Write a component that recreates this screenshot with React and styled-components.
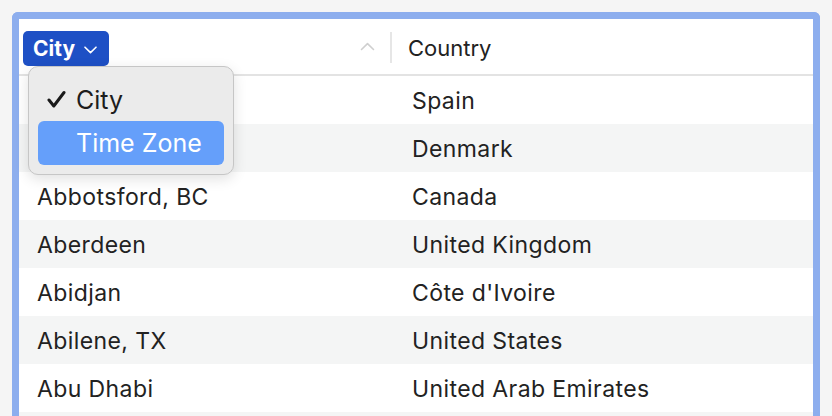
import styled, { createGlobalStyle } from "styled-components";

const GlobalStyle = createGlobalStyle`
  html, body {
    margin: 0;
    padding: 0;
    background: #f5f5f5;
    height: 416px;
    overflow: hidden;
  }
  body {
    font-family: Inter, "Noto Sans", "Liberation Sans", sans-serif;
    color: #222;
  }
`;

// first two city names sit under the open menu
const rows = [
  ["", "Spain"],
  ["", "Denmark"],
  ["Abbotsford, BC", "Canada"],
  ["Aberdeen", "United Kingdom"],
  ["Abidjan", "Côte d'Ivoire"],
  ["Abilene, TX", "United States"],
  ["Abu Dhabi", "United Arab Emirates"],
];

const ChevronDown = () => (
  <svg width="13" height="8" viewBox="0 0 13 8" fill="none">
    <path d="M1 1.2l5.5 5.4L12 1.2" stroke="#fff" strokeWidth="1.6" strokeLinecap="round" strokeLinejoin="round" />
  </svg>
);

const ChevronUp = () => (
  <svg width="15" height="9" viewBox="0 0 15 9" fill="none">
    <path d="M1.5 7.5l6-5.8 6 5.8" stroke="#cfcfcf" strokeWidth="1.6" strokeLinecap="round" strokeLinejoin="round" />
  </svg>
);

const Check = () => (
  <svg width="19" height="19" viewBox="0 0 19 19" fill="none">
    <path d="M2 10l4.8 6L17 2.5" stroke="#1a1a1a" strokeWidth="3" strokeLinecap="round" strokeLinejoin="round" />
  </svg>
);

export default function App() {
  return (
    <>
      <GlobalStyle />
      <Page>
        <Frame>
          <Header>
            <HeadCell $first>
              <ColumnButton>
                City <ChevronDown />
              </ColumnButton>
              <SortIcon>
                <ChevronUp />
              </SortIcon>
              <Menu>
                <MenuItem>
                  <CheckMark>
                    <Check />
                  </CheckMark>
                  City
                </MenuItem>
                <MenuItem $active>Time Zone</MenuItem>
              </Menu>
            </HeadCell>
            <HeadCell>Country</HeadCell>
          </Header>
          {rows.map(([city, country], i) => (
            <Row key={i} $striped={i % 2 === 1}>
              <Cell $first>{city}</Cell>
              <Cell>{country}</Cell>
            </Row>
          ))}
          <Row $striped />
        </Frame>
      </Page>
    </>
  );
}

const Page = styled.div`
  padding: 12px 12px 0;
  height: 416px;
  box-sizing: border-box;
  overflow: hidden;
`;

const Frame = styled.div`
  border: 7px solid #8daeee;
  border-bottom: none;
  border-radius: 6px 6px 0 0;
  background: #fff;
  height: 420px;
  box-sizing: border-box;
`;

const Header = styled.div`
  display: grid;
  grid-template-columns: 372px 1fr;
  height: 55px;
  border-bottom: 2px solid #e3e3e3;
  align-items: center;
`;

const HeadCell = styled.div`
  position: relative;
  display: flex;
  align-items: center;
  height: 100%;
  font-size: 22px;
  padding-top: 2px;
  box-sizing: border-box;
  padding-left: ${(p) => (p.$first ? "4px" : "17px")};
  &::after {
    content: "";
    display: ${(p) => (p.$first ? "block" : "none")};
    position: absolute;
    right: -1px;
    top: 13px;
    bottom: 11px;
    width: 2px;
    background: #e6e6e6;
  }
`;

const ColumnButton = styled.button`
  display: flex;
  align-items: center;
  gap: 9px;
  height: 35px;
  margin-top: 2px;
  padding: 0 12px 0 10px;
  border: none;
  border-radius: 5px;
  background: #1e50c5;
  color: #fff;
  font-family: inherit;
  font-size: 21px;
  font-weight: 700;
  svg {
    margin-top: 3px;
  }
`;

const SortIcon = styled.span`
  display: flex;
  margin-left: auto;
  margin-right: 16px;
  margin-top: -2px;
`;

const Menu = styled.div`
  position: absolute;
  left: 9px;
  top: 47px;
  width: 186px;
  padding: 12px 9px 9px;
  background: #ebebeb;
  border: 1px solid #c6c6c6;
  border-radius: 10px;
  box-shadow: 0 4px 14px rgba(0, 0, 0, 0.12);
  z-index: 5;
`;

const MenuItem = styled.div`
  position: relative;
  display: flex;
  align-items: center;
  height: ${(p) => (p.$active ? "44px" : "42px")};
  padding-left: 38px;
  border-radius: 6px;
  font-size: 25px;
  color: ${(p) => (p.$active ? "#fff" : "#1d1d1d")};
  background: ${(p) => (p.$active ? "#659ffa" : "transparent")};
`;

const CheckMark = styled.span`
  position: absolute;
  left: 9px;
  top: 11px;
  display: flex;
`;

const Row = styled.div`
  display: grid;
  grid-template-columns: 372px 1fr;
  height: 48px;
  align-items: center;
  background: ${(p) => (p.$striped ? "#f4f5f5" : "#fff")};
`;

const Cell = styled.div`
  font-size: 23px;
  letter-spacing: 0.4px;
  padding-top: 2px;
  padding-left: ${(p) => (p.$first ? "18px" : "21px")};
  white-space: nowrap;
`;
